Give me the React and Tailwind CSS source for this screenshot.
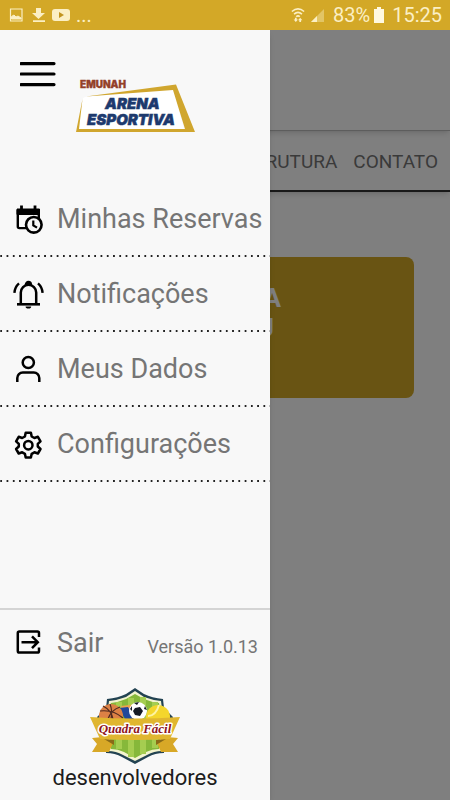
import React, { useState } from "react";

const CalendarIcon = () => (
  <svg viewBox="0 0 32 32" className="w-8 h-8" fill="none" stroke="#000">
    <path d="M5.800 6v16.500a1.600 1.600 0 0 0 1.600 1.600H17M26.800 6v9" strokeWidth="2.400" />
    <path d="M5 5h22.500v5.500H5z" fill="#000" strokeWidth="1" />
    <path d="M9.500 1.500V6M23 1.500V6" strokeWidth="2.800" />
    <circle cx="21.800" cy="20.800" r="7.800" fill="#f8f8f8" strokeWidth="2.600" />
    <path d="M21.300 16.500v4.800l3.700 2.400" strokeWidth="2.200" />
  </svg>
);

const BellIcon = () => (
  <svg viewBox="0 0 32 32" className="w-8 h-8" fill="none" stroke="#000">
    <path d="M8.800 25V13.500a7.700 7.700 0 0 1 15.400 0V25" strokeWidth="2.500" />
    <path d="M5 25.300h23" strokeWidth="2.600" />
    <path d="M13.500 5.500a2.900 2.900 0 0 1 5.800 0z" fill="#000" strokeWidth="1.500" />
    <path d="M13.600 27.500h5.600a2.800 2 0 0 1-5.600 0z" fill="#000" stroke="none" />
    <path d="M7 4.400a14 14 0 0 0-4.600 9.500M26 4.400a14 14 0 0 1 4.600 9.500" strokeWidth="2.400" />
  </svg>
);

const UserIcon = () => (
  <svg viewBox="0 0 32 32" className="w-8 h-8" fill="none" stroke="#000">
    <circle cx="16.300" cy="8.500" r="5.600" strokeWidth="2.500" />
    <path d="M5.300 28v-4a5.500 5.500 0 0 1 5.500-5.500h11a5.500 5.500 0 0 1 5.500 5.500v4" strokeWidth="2.500" />
  </svg>
);

const GearIcon = () => (
  <svg viewBox="0 0 32 32" className="w-8 h-8" fill="none" stroke="#000" strokeLinejoin="round">
    <path
      d="M13.700 3.800h5.200l.8 3.700 2.700 1.500 3.500-1.200 2.600 4.500-2.700 2.500v2.700l2.700 2.500-2.600 4.500-3.500-1.200-2.700 1.500-.8 3.700h-5.200l-.8-3.700-2.700-1.500-3.500 1.200-2.600-4.500 2.700-2.500v-2.700l-2.700-2.500 2.600-4.500 3.500 1.200 2.700-1.500z"
      strokeWidth="2.500"
    />
    <circle cx="16.300" cy="16.200" r="4.200" strokeWidth="2.500" />
  </svg>
);

const ExitIcon = () => (
  <svg viewBox="0 0 32 32" className="w-8 h-8" fill="none" stroke="#000">
    <path
      d="M27 10V6a1.600 1.600 0 0 0-1.600-1.600H7.400A1.600 1.600 0 0 0 5.800 6v18a1.600 1.600 0 0 0 1.600 1.600h18A1.600 1.600 0 0 0 27 24v-3.500"
      strokeWidth="2.500"
    />
    <path d="M9.500 15.200h16M20 9.300l5.800 5.900-5.800 5.900" strokeWidth="2.500" />
  </svg>
);

const ArenaLogo = () => (
  <svg viewBox="0 -4 120 60" className="w-[120px] h-[60px]" role="img" aria-label="Emunah Arena Esportiva">
    <path d="M9 17 97 9l11 40H2l5-31z" fill="#fff" />
    <path d="M10 16.500 100 4.500l19 47.500H0l6.500-33L3 49h106L97 10z" fill="#d0a62e" />
    <text
      x="4"
      y="8"
      fontSize="10"
      fontWeight="900"
      fill="#93402a"
      stroke="#93402a"
      strokeWidth=".3"
      className="font-[Inter,sans-serif]"
    >
      EMUNAH
    </text>
    <text
      fontSize="15"
      fontStyle="italic"
      fontWeight="900"
      fill="#1d3a6e"
      stroke="#1d3a6e"
      strokeWidth=".5"
      className="font-[Inter,sans-serif]"
    >
      <tspan x="29" y="29">ARENA</tspan>
      <tspan x="11" y="45">ESPORTIVA</tspan>
    </text>
  </svg>
);

const QuadraLogo = () => (
  <svg viewBox="0 0 90 76" className="w-[90px] h-[76px]" role="img" aria-label="Quadra Fácil">
    <path d="M45 0 54 6q8 4 19 5l1 9 9 9-6 19-3 7v10q-9 0-16 4l-13 7-13-7q-7-4-16-4V55l-3-7-6-19 9-9 1-9q11-1 19-5z" fill="#234352" />
    <path d="M45 3 54 9q8 3 17 4l1 8 8 9-6 18-2 7v8q-8 0-15 4l-12 6-12-6q-7-4-15-4v-8l-2-7-6-18 8-9 1-8q9-1 17-4z" fill="#f3f4cf" />
    <path d="M45 6 54 11q7 3 15 4l1 7 7 9-6 17-2 7v6q-7 0-13 3l-11 6-11-6q-6-3-13-3v-6l-2-7-6-17 7-9 1-7q8-1 15-4z" fill="#86b83a" />
    <path d="M26 14h6v47h-6zM38 10h6v59h-6zM50 9h6v57h-6zM62 14h6v46h-6z" fill="#a5cd50" />
    <path d="m31 18 17-2 5 5-7 10H37z" fill="#f1a24c" />
    <path d="m29 20 9-1 7 12H35z" fill="#22489b" />
    <circle cx="21" cy="28" r="12" fill="#dc8145" />
    <path
      d="M20 16c2 5 2 10 1 15M10 23c8-1 16 1 23 7M13 18c6 3 9 8 10 13M30 19c-6 2-10 6-12 12"
      fill="none"
      stroke="#4f2a20"
      strokeWidth="1.2"
    />
    <circle cx="48" cy="23" r="9" fill="#fff" />
    <path d="m45 20 5-1 3 4-3 5-5-1-2-4zM44 15l5-1-2 3zM55 18l2 4-3-1zM40 21l2-3v5z" fill="#151b25" />
    <circle cx="68" cy="29" r="12" fill="#f4d62c" />
    <path d="M58 28c6 0 9-4 11-11" fill="none" stroke="#fdf3a4" strokeWidth="2" />
    <path d="M13 49 2 50l5 6-5 8h17l5-11zM77 49l11 1-5 6 5 8H71l-5-11z" fill="#d8a827" />
    <path d="m14 51 10 1v5zM76 51l-10 1v5z" fill="#8a6a17" />
    <path d="M0 29q45 3 90 0L80 51q-35 2-70 0z" fill="#e0b630" />
    <text
      x="45"
      y="45"
      textAnchor="middle"
      fontSize="13"
      fontWeight="700"
      fontStyle="italic"
      fill="#8f1420"
      stroke="#fff"
      strokeWidth="3"
      strokeLinejoin="round"
      paintOrder="stroke"
      className="font-['Liberation_Serif',serif]"
    >
      Quadra Fácil
    </text>
  </svg>
);

const StatusBar = () => (
  <div className="h-[30px] px-2 flex items-center justify-between bg-[#d3a827] text-[#fbefc4]">
    <div className="flex items-center gap-1.5">
      <svg viewBox="0 0 16 16" className="w-4 h-4" fill="none" stroke="currentColor">
        <path d="M2.500 2h11.500v12H2.500z" strokeWidth="1.200" />
        <path d="M3.500 12V9.500L6 8l2 2 2-1 3 2v1z" fill="currentColor" />
      </svg>
      <svg viewBox="0 0 16 16" className="w-4 h-4" fill="currentColor">
        <path d="M6 1h5v5h4l-6.500 6L2 6h4zM3 13.200h12V15H3z" />
      </svg>
      <svg viewBox="0 0 18 14" className="w-[18px] h-[14px]">
        <rect y="1" width="18" height="12" rx="3" fill="currentColor" />
        <path d="m7 4 5 3-5 3z" fill="#c2941f" />
      </svg>
      <span className="text-xl leading-5">...</span>
    </div>
    <div className="flex items-center gap-1 text-xl">
      <svg viewBox="0 0 16 18" className="w-3.5 h-4" fill="none" stroke="currentColor">
        <path d="M1 5q7-6 14 0M3.500 8q4.500-4 9 0M6 11q2-2 4 0" strokeWidth="1.800" />
        <path d="M4.500 12h2v2H8l-2.500 3L3 14h1.500zM9.500 17h2v-2H13l-2.500-3L8 15h1.500z" fill="currentColor" stroke="none" />
      </svg>
      <svg viewBox="0 0 16 16" className="w-4 h-4 mr-1">
        <path d="M2 15 15 2v13z" fill="currentColor" opacity=".4" />
        <path d="M2 15h6V9z" fill="currentColor" />
      </svg>
      <span>83%</span>
      <svg viewBox="0 0 10 16" className="w-2.5 h-4 mr-1" fill="#fff8e0">
        <path d="M3 0h4v2h3v14H0V2h3z" />
      </svg>
      <span>15:25</span>
    </div>
  </div>
);

const items = [
  { label: "Minhas Reservas", icon: <CalendarIcon /> },
  { label: "Notificações", icon: <BellIcon /> },
  { label: "Meus Dados", icon: <UserIcon /> },
  { label: "Configurações", icon: <GearIcon /> },
];

const Drawer = ({ onClose }) => (
  <aside className="absolute inset-y-0 left-0 w-3/5 flex flex-col overflow-hidden bg-[#f8f8f8] shadow-md">
    <div className="h-[152px] pl-5 pt-8 flex items-start gap-5">
      <button type="button" aria-label="Fechar menu" onClick={onClose}>
        <svg viewBox="0 0 36 26" className="w-9 h-[26px]" stroke="#000" strokeWidth="3.200" strokeLinecap="round">
          <path d="M1 1.600h33M1 12h33M1 22.600h33" />
        </svg>
      </button>
      <div className="pt-3.5">
        <ArenaLogo />
      </div>
    </div>

    <nav>
      {items.map((item) => (
        <a
          key={item.label}
          href="#"
          className="h-[75px] pl-3 flex items-center gap-[13px] text-[27px] text-[#757575] whitespace-nowrap bg-[linear-gradient(90deg,#222_2px,transparent_2px)] bg-[length:calc(100%/43)_2px] bg-repeat-x bg-bottom"
        >
          <span className="shrink-0">{item.icon}</span>
          {item.label}
        </a>
      ))}
    </nav>

    <footer className="mt-auto pb-2 border-t-2 border-[#d4d4d4] flex flex-col items-center">
      <div className="self-stretch h-[66px] px-3 flex items-center justify-between text-[#757575]">
        <button type="button" className="flex items-center gap-[13px] text-[27px]">
          <ExitIcon />
          Sair
        </button>
        <span className="pt-2 text-lg">Versão 1.0.13</span>
      </div>
      <div className="pt-3">
        <QuadraLogo />
      </div>
      <p className="text-[22px] leading-7 text-[#1c1c1c]">desenvolvedores</p>
    </footer>
  </aside>
);

export default function App() {
  const [open, setOpen] = useState(true);

  return (
    <div className="min-h-screen flex flex-col font-[Roboto,sans-serif]">
      <StatusBar />
      <div className="relative flex-1 overflow-hidden bg-white">
        <header className="h-[101px] border-b border-[#bbb] shadow-md" />
        <nav className="h-[61px] px-3 pt-1 flex items-center justify-end gap-4 border-b-2 border-black/80 text-[19px] text-[#757575] shadow-md">
          <a href="#">ESTRUTURA</a>
          <a href="#">CONTATO</a>
        </nav>
        <section className="mx-9 mt-[65px] h-[141px] pt-[26px] rounded-lg bg-[#d3a827] text-center text-[26px] leading-[30px] font-bold text-white">
          <p>RESERVA</p>
          <p>PARAJU</p>
        </section>

        {open && (
          <>
            <div className="absolute inset-0 bg-black/50" onClick={() => setOpen(false)} />
            <Drawer onClose={() => setOpen(false)} />
          </>
        )}
      </div>
    </div>
  );
}
